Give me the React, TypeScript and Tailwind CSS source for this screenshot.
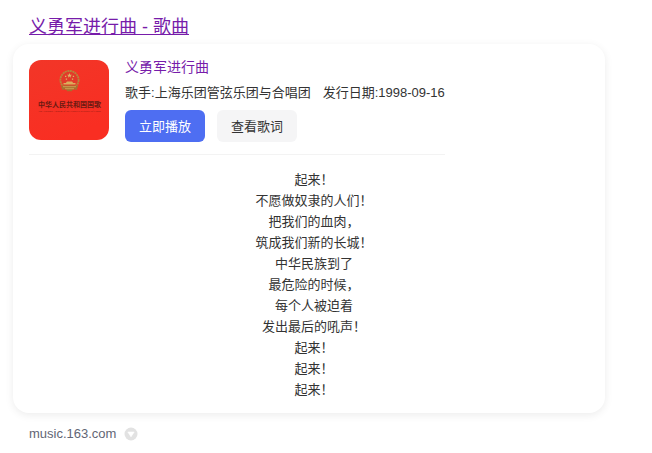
const fontStack = "font-['Liberation_Sans','Noto_Sans_CJK_SC',sans-serif]";

const song = {
  title: "义勇军进行曲",
  artist: "上海乐团管弦乐团与合唱团",
  released: "1998-09-16",
};

const lyrics = [
  "起来！",
  "不愿做奴隶的人们！",
  "把我们的血肉，",
  "筑成我们新的长城！",
  "中华民族到了",
  "最危险的时候，",
  "每个人被迫着",
  "发出最后的吼声！",
  "起来！",
  "起来！",
  "起来！",
];

function Cover() {
  return (
    <svg viewBox="0 0 80 80" className="size-20 shrink-0 rounded-xl" role="img" aria-label={song.title}>
      <defs>
        <linearGradient id="cover" x1="0" y1="0" x2="0.4" y2="1">
          <stop offset="0" stopColor="#f23628" />
          <stop offset="1" stopColor="#f92e22" />
        </linearGradient>
      </defs>
      <rect width="80" height="80" fill="url(#cover)" />
      <circle cx="40.5" cy="20" r="9" fill="none" stroke="#b5863c" strokeWidth="2" strokeDasharray="2 0.5" />
      <circle cx="40.5" cy="20" r="8" fill="#e23a2a" />
      <path
        d="M40.5 13l.7 1.8h1.8l-1.4 1.1.5 1.8-1.6-1.1-1.6 1.1.5-1.8-1.4-1.1h1.8zM36 15.8h1.3v1.3H36zM43.8 15.8h1.3v1.3h-1.3zM36.8 18.4h1.3v1.3h-1.3zM42.9 18.4h1.3v1.3h-1.3z"
        fill="#dcb866"
      />
      <path d="M34.5 24.5h12V23h-2.4l-1-1.4h-5.2l-1 1.4h-2.4z" fill="#dcae5c" />
      <path d="M31.8 25.5h17.4l-1.4 4.4-3.8-.6-1.2 2h-4.6l-1.2-2-3.8.6z" fill="#a8702f" />
      <path d="M34 26.7h13M36 28.7h9" stroke="#d8a85a" strokeWidth="0.8" />
      <text x="40.5" y="47" textAnchor="middle" fontSize="7" fontWeight="700" fill="#6b1a12" fontFamily="'Liberation Serif', 'Noto Sans CJK SC', serif">
        中华人民共和国国歌
      </text>
      <text x="40.5" y="51.5" textAnchor="middle" fontSize="2.8" fill="#8a1a12" fontFamily="'Liberation Serif', serif">
        The National Anthem of the People's Republic of China
      </text>
    </svg>
  );
}

export default function App() {
  return (
    <main className={`max-w-[605px] bg-white pt-4 pl-[13px] text-[13px] text-[#333] ${fontStack}`}>
      <h3 className="pl-4 text-lg leading-[22px]">
        <a href="#song" className="text-[#771caa] underline">
          {song.title} - 歌曲
        </a>
      </h3>

      <section id="song" className="mt-[6px] rounded-2xl pt-4 pr-[6px] pb-[13px] pl-4 shadow-[0_2px_8px_0_rgba(0,0,0,0.08)]">
        <div className="inline-flex gap-4 border-b border-[#f3f3f3] pb-3 align-top">
          <Cover />
          <div>
            <a href="#song" className="block text-sm leading-[14px] text-[#771caa]">
              {song.title}
            </a>
            <p className="mt-[10px] flex gap-3 leading-[18px] whitespace-nowrap">
              <span>歌手:{song.artist}</span>
              <span>发行日期:{song.released}</span>
            </p>
            <div className="mt-2 flex gap-3">
              <button type="button" className="h-8 w-20 rounded-md bg-[#4e6ef2] pt-[2px] text-white">
                立即播放
              </button>
              <button type="button" className="h-8 w-20 rounded-md bg-[#f5f5f6] pt-[2px]">
                查看歌词
              </button>
            </div>
          </div>
        </div>

        <div className="mt-[14px] text-center leading-[21px]">
          {lyrics.map((line, i) => (
            <p key={i}>{line}</p>
          ))}
        </div>
      </section>

      <footer className="mt-3 flex items-center gap-2 pl-4">
        <a href="#source" className="leading-[18px] text-[#626675]">
          music.163.com
        </a>
        <button type="button" aria-label="更多">
          <svg viewBox="0 0 14 14" className="size-[14px]" aria-hidden="true">
            <circle cx="7" cy="7" r="6.5" fill="#e2e2e2" />
            <path d="M3.8 5h6.4L7 9.8z" fill="#fff" stroke="#fff" strokeWidth="0.6" strokeLinejoin="round" />
          </svg>
        </button>
      </footer>
    </main>
  );
}
